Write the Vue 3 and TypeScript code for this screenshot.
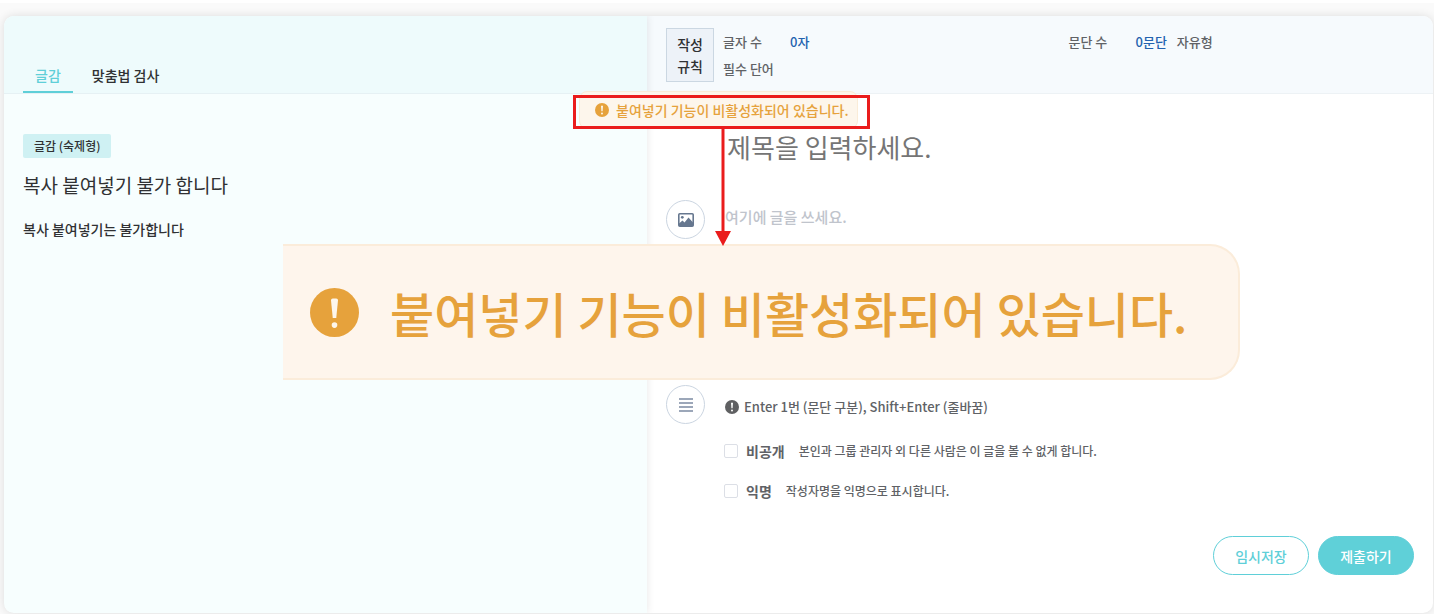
<script setup lang="ts">
import { ref } from 'vue'

interface Option {
  id: string
  label: string
  description: string
}

const notice = '붙여넣기 기능이 비활성화되어 있습니다.'
const title = ref('')
const content = ref('')
const checked = ref<string[]>([])

const options: Option[] = [
  { id: 'private', label: '비공개', description: '본인과 그룹 관리자 외 다른 사람은 이 글을 볼 수 없게 합니다.' },
  { id: 'anonymous', label: '익명', description: '작성자명을 익명으로 표시합니다.' },
]
</script>

<template>
  <div class="page">
    <main class="card">
      <section class="guide">
        <nav class="tabs">
          <button type="button" class="tab active">글감</button>
          <button type="button" class="tab">맞춤법 검사</button>
        </nav>
        <div class="guide-body">
          <span class="tag">글감 (숙제형)</span>
          <h1>복사 붙여넣기 불가 합니다</h1>
          <p>복사 붙여넣기는 불가합니다</p>
        </div>
      </section>

      <section class="writer">
        <header class="rules">
          <strong class="rules-badge"><span>작성</span><span>규칙</span></strong>
          <dl class="rules-grid">
            <div><dt>글자 수</dt><dd class="value">0자</dd></div>
            <div><dt>문단 수</dt><dd class="value">0문단</dd><dd>자유형</dd></div>
            <div><dt>필수 단어</dt></div>
          </dl>
        </header>

        <form class="form" @submit.prevent>
          <input v-model="title" class="title" type="text" placeholder="제목을 입력하세요." aria-label="제목" />

          <div class="row">
            <button type="button" class="round" aria-label="이미지 추가">
              <svg width="16" height="14" viewBox="0 0 16 14">
                <rect x="0.8" y="0.8" width="14.4" height="12.4" rx="1" fill="none" stroke="#66778f" stroke-width="1.6" />
                <circle cx="4.3" cy="4.3" r="1.4" fill="#66778f" />
                <path d="M1 13V10.5L4.5 7.5L6.5 9.5L10.5 4.5L15 9.5V13Z" fill="#66778f" />
              </svg>
            </button>
            <textarea v-model="content" class="editor" placeholder="여기에 글을 쓰세요." aria-label="본문"></textarea>
          </div>

          <div class="row">
            <button type="button" class="round" aria-label="문단 정렬">
              <svg width="14" height="14" viewBox="0 0 14 14">
                <path d="M0 1H14M0 5H14M0 9H14M0 13H14" stroke="#7c8ba3" stroke-width="1.6" />
              </svg>
            </button>
            <div class="settings">
              <p class="hint">
                <svg width="14" height="14" viewBox="0 0 14 14">
                  <circle cx="7" cy="7" r="7" fill="#5f6062" />
                  <path d="M6 2.8H8L7.6 8.2H6.4Z" fill="#fff" />
                  <circle cx="7" cy="10.4" r="1" fill="#fff" />
                </svg>
                Enter 1번 (문단 구분), Shift+Enter (줄바꿈)
              </p>
              <label v-for="option in options" :key="option.id" class="option">
                <input v-model="checked" type="checkbox" :value="option.id" />
                <b>{{ option.label }}</b>
                <span>{{ option.description }}</span>
              </label>
            </div>
          </div>

          <div class="actions">
            <button type="button" class="action">임시저장</button>
            <button type="submit" class="action primary">제출하기</button>
          </div>
        </form>
      </section>
    </main>

    <div class="toast" role="alert">
      <svg width="14" height="14" viewBox="0 0 14 14">
        <circle cx="7" cy="7" r="7" fill="#e6a23c" />
        <path d="M6 2.8H8L7.6 8.2H6.4Z" fill="#fdf6ec" />
        <circle cx="7" cy="10.4" r="1" fill="#fdf6ec" />
      </svg>
      <span>{{ notice }}</span>
    </div>

    <div class="magnified">
      <svg width="49" height="49" viewBox="0 0 14 14">
        <circle cx="7" cy="7" r="7" fill="#e6a23c" />
        <path d="M6 3.5Q6 3 6.5 3H7.5Q8 3 8 3.5L7.5 8.6H6.5Z" fill="#fdf6ec" />
        <circle cx="7" cy="10.6" r="0.8" fill="#fdf6ec" />
      </svg>
      <span>{{ notice }}</span>
    </div>

    <div class="marker"></div>
    <svg class="arrow" width="16" height="119" viewBox="0 0 16 119">
      <path d="M8 0V106" stroke="#ea1c1c" stroke-width="3" />
      <path d="M0 104H16L8 119Z" fill="#ea1c1c" />
    </svg>
  </div>
</template>

<style>
body {
  margin: 0;
}
</style>

<style scoped>
.page,
.page * {
  box-sizing: border-box;
}

.page {
  position: relative;
  display: flex;
  min-height: 100vh;
  padding: 13px 1px 1px 4px;
  border-top: 3px solid #fff;
  background: #fafafa;
  color: #303133;
  font-family: "Noto Sans CJK KR", sans-serif;
  font-size: 14px;
  font-weight: 500;
  overflow: hidden;
}

svg {
  flex: none;
}

button,
input,
textarea {
  font: inherit;
}

button {
  padding: 0;
  border: 0;
  background: none;
  cursor: pointer;
}

.card {
  flex: 1;
  display: grid;
  grid-template-columns: 45fr 55fr;
  border-radius: 10px;
  background: #fff;
  box-shadow: 0 0 10px rgba(0, 0, 0, 0.12);
  overflow: hidden;
}

.guide {
  z-index: 1;
  background: #f7fefe;
  box-shadow: 0 0 8px rgba(0, 0, 0, 0.1);
}

.tabs {
  display: flex;
  align-items: flex-end;
  gap: 7px;
  height: 78px;
  padding: 0 19px;
  border-bottom: 1px solid #e6f1f4;
  background: #eefbfc;
}

.tab {
  height: 35px;
  padding: 0 12px;
  border-bottom: 2px solid transparent;
  color: #303133;
  line-height: 32px;
}

.tab.active {
  border-color: #5fcfd8;
  color: #5fcfd8;
}

.guide-body {
  padding: 40px 19px;
}

.tag {
  display: inline-block;
  padding: 0 11px;
  border-radius: 2px;
  background: #cff1f3;
  font-size: 12px;
  line-height: 24px;
}

h1 {
  margin: 11px 0 0;
  font-size: 19px;
  font-weight: 400;
  line-height: 32px;
}

.guide-body p {
  margin: 16px 0 0;
  line-height: 24px;
}

.writer {
  min-width: 0;
}

.rules {
  display: flex;
  gap: 9px;
  height: 78px;
  padding: 12px 19px 11px;
  border-bottom: 1px solid #edf2f5;
  background: #f6fafd;
}

.rules-badge {
  display: flex;
  flex-direction: column;
  justify-content: center;
  width: 48px;
  height: 54px;
  border: 1px solid #cbd7e2;
  background: #edf2f8;
  font-weight: 500;
  line-height: 22px;
  text-align: center;
}

.rules-grid {
  flex: 1;
  display: grid;
  grid-template-columns: 1fr 1fr;
  grid-auto-rows: 27px;
  margin: 0;
  color: #606266;
  font-size: 13px;
  line-height: 28px;
}

.rules-grid div {
  display: flex;
  gap: 10px;
}

.rules-grid dt {
  min-width: 57px;
}

.rules-grid dd {
  margin: 0;
}

.rules-grid .value {
  color: #2362af;
}

.form {
  padding: 32px 19px 38px;
}

.title {
  display: block;
  width: calc(100% - 58px);
  height: 40px;
  margin: 0 0 34px 58px;
  padding: 0 3px;
  border: 0;
  outline: 0;
  background: none;
  font-size: 26px;
  font-weight: 400;
}

.title::placeholder {
  color: #757575;
}

.row {
  display: flex;
  align-items: flex-start;
  gap: 19px;
}

.round {
  flex: none;
  display: grid;
  place-items: center;
  width: 39px;
  height: 39px;
  border: 1px solid #cbd5e1;
  border-radius: 50%;
  background: #fff;
}

.editor {
  flex: 1;
  height: 185px;
  padding: 4px 1px;
  border: 0;
  outline: 0;
  resize: none;
  font-size: 15px;
  line-height: 26px;
}

.editor::placeholder {
  color: #c0c4cc;
}

.settings {
  display: flex;
  flex-direction: column;
  gap: 16px;
  padding-top: 10px;
  color: #606266;
}

.hint {
  display: flex;
  align-items: center;
  gap: 5px;
  margin: 0 0 4px;
  padding-left: 1px;
  font-size: 13px;
  line-height: 24px;
}

.option {
  display: flex;
  align-items: center;
  line-height: 24px;
}

.option input {
  appearance: none;
  width: 14px;
  height: 14px;
  margin: 0 8px 0 0;
  border: 1px solid #dcdfe6;
  border-radius: 2px;
  background: #fff;
}

.option input:checked {
  background: #5fcfd8;
}

.option b {
  margin-right: 14px;
}

.option span {
  font-size: 12px;
}

.actions {
  display: flex;
  justify-content: flex-end;
  gap: 9px;
  margin-top: 33px;
}

.action {
  width: 96px;
  height: 39px;
  border: 1px solid #5fcfd8;
  border-radius: 20px;
  background: #fff;
  color: #5fcfd8;
}

.action.primary {
  background: #5fd0d8;
  color: #fff;
}

.toast {
  position: absolute;
  z-index: 2;
  top: 88px;
  left: 50%;
  display: flex;
  align-items: center;
  gap: 7px;
  width: 279px;
  height: 38px;
  margin-left: -138px;
  padding: 0 15px;
  border: 1px solid #faecd8;
  border-radius: 8px;
  background: #fdf6ec;
  color: #e6a23c;
  font-size: 14px;
  white-space: nowrap;
}

.magnified {
  position: absolute;
  z-index: 2;
  top: 241px;
  left: 50%;
  display: flex;
  align-items: center;
  gap: 31px;
  width: 957px;
  height: 136px;
  margin-left: -434px;
  padding: 0 27px;
  border: 2px solid #fbecda;
  border-left: 0;
  border-radius: 0 30px 30px 0;
  background: #fef5ec;
  color: #e6a23c;
  font-size: 48px;
  white-space: nowrap;
}

.marker {
  position: absolute;
  z-index: 3;
  top: 92px;
  left: 50%;
  width: 297px;
  height: 34px;
  margin-left: -144px;
  border: 3px solid #ea1c1c;
}

.arrow {
  position: absolute;
  z-index: 3;
  top: 124px;
  left: 50%;
  margin-left: -2px;
}
</style>
